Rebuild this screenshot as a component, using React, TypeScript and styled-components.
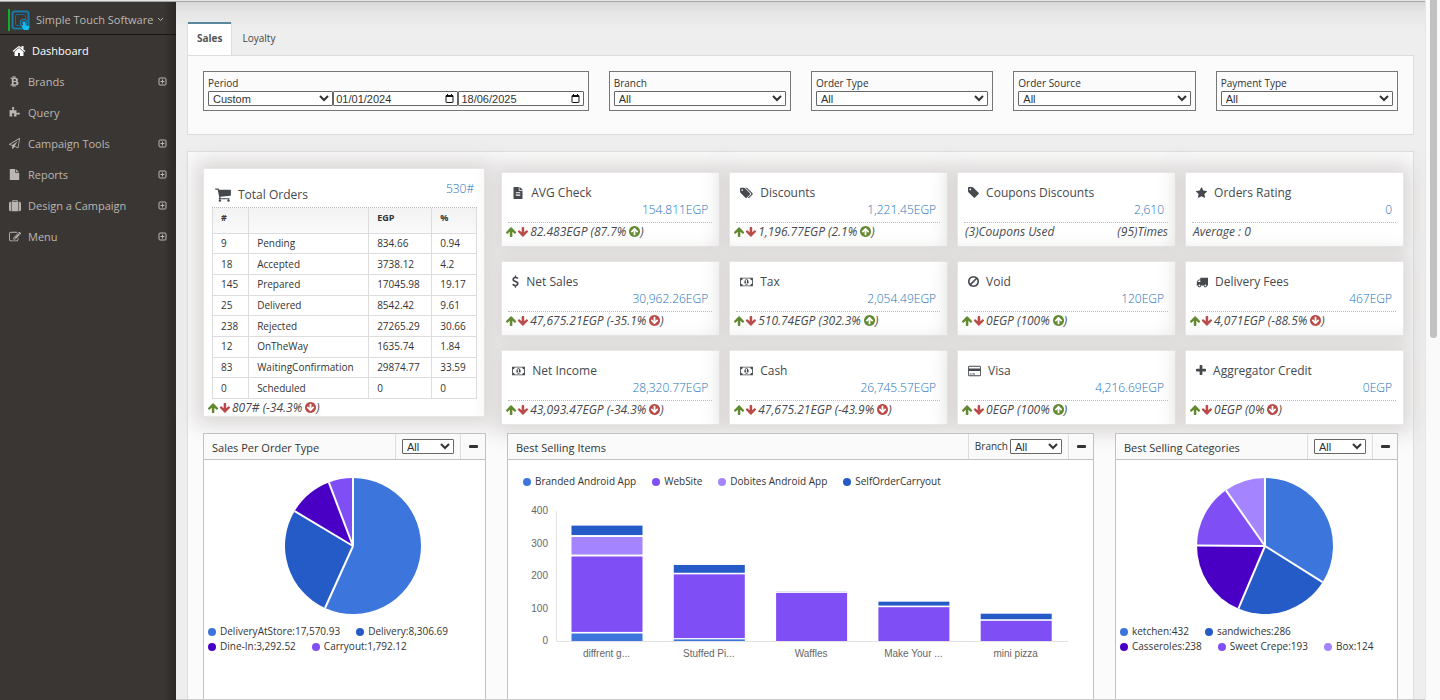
import React from "react";
import styled, { createGlobalStyle } from "styled-components";
import { FaBtc, FaFileAlt } from "react-icons/fa";

const GlobalStyle = createGlobalStyle`
  *, *::before, *::after { box-sizing: border-box; }
  body {
    margin: 0;
    background: #eee;
    color: #333;
    font-family: "Open Sans", "Liberation Sans", sans-serif;
    font-size: 10px;
    line-height: 15px;
  }
  h1, h2, h3, p, ul { margin: 0; padding: 0; font-weight: 400; }
  ul { list-style: none; }
  a { color: inherit; text-decoration: none; }
  svg { flex: none; }
`;

/* ---------- icons ---------- */

/* Each entry: left edge of the glyph, its advance width, its path on a 1792-unit em. */
const glyphs = {
  home: [0, 1792, "M1472 992v480q0 26-19 45t-45 19h-384v-384h-256v384h-384q-26 0-45-19t-19-45v-480q0-1 .5-3t.5-3l575-474 575 474q1 2 1 6zm223-69l-62 74q-8 9-21 11h-3q-13 0-21-7l-692-577-692 577q-12 8-24 7-13-2-21-11l-62-74q-8-10-7-23.5t11-21.5l719-599q32-26 76-26t76 26l244 204v-195q0-14 9-23t23-9h192q14 0 23 9t9 23v408l219 182q10 8 11 21.5t-7 23.5z"],
  puzzle: [0, 1792, "M1755 1083q0 81-44.5 135t-123.5 54q-41 0-77.5-17.5t-59-38-56.5-38-71-17.5q-110 0-110 124 0 39 16 115t15 115v5q-22 0-33 1-34 3-97.5 11.5t-115.5 13.5-98 5q-61 0-103-26.5t-42-83.5q0-37 17.5-71t38-56.5 38-59 17.5-77.5q0-79-54-123.5t-135-44.5q-84 0-143 45.5t-59 127.5q0 43 15 83t33.5 64.5 33.5 53 15 50.5q0 45-46 89-37 35-117 35-95 0-245-24-9-2-27.5-4t-27.5-4l-13-2q-1 0-3-1-2 0-2-1v-1024q2 1 17.5 3.5t34 5 21.5 3.5q150 24 245 24 80 0 117-35 46-44 46-89 0-22-15-50.5t-33.5-53-33.5-64.5-15-83q0-82 59-127.5t144-45.5q80 0 134 44.5t54 123.5q0 41-17.5 77.5t-38 59-38 56.5-17.5 71q0 57 42 83.5t103 26.5q64 0 180-15t163-17v2q-1 2-3.5 17.5t-5 34-3.5 21.5q-24 150-24 245 0 80 35 117 44 46 89 46 22 0 50.5-15t53-33.5 64.5-33.5 83-15q82 0 127.5 59t45.5 143z"],
  plane: [0, 1792, "M1764 11q33 24 27 64l-256 1536q-5 29-32 45-14 8-31 8-11 0-24-5l-527-215-298 327q-18 21-47 21-14 0-23-4-19-7-30-23.5t-11-36.5v-452l-472-193q-37-14-40-55-3-39 32-59l1664-960q35-21 68 2zm-342 1499l221-1323-1434 827 336 137 863-639-478 797z"],
  file: [0, 1792, "M1152 512v-472q22 14 36 28l408 408q14 14 28 36h-472zm-128 32q0 40 28 68t68 28h544v1056q0 40-28 68t-68 28h-1344q-40 0-68-28t-28-68v-1600q0-40 28-68t68-28h800v544z"],
  suitcase: [0, 1792, "M640 256h512v-128h-512v128zm-352 0v1408h-64q-92 0-158-66t-66-158v-960q0-92 66-158t158-66h64zm1120 0v1408h-1024v-1408h128v-160q0-40 28-68t68-28h576q40 0 68 28t28 68v160h128zm384 224v960q0 92-66 158t-158 66h-64v-1408h64q92 0 158 66t66 158z"],
  edit: [0, 1792, "M888 1184l116-116-152-152-116 116v56h96v96h56zm440-720q-16-16-33 1l-350 350q-17 17-1 33t33-1l350-350q17-17 1-33zm80 594v190q0 119-84.5 203.5t-203.5 84.5h-832q-119 0-203.5-84.5t-84.5-203.5v-832q0-119 84.5-203.5t203.5-84.5h832q63 0 117 25 15 7 18 23 3 17-9 29l-49 49q-14 14-32 8-23-6-45-6h-832q-66 0-113 47t-47 113v832q0 66 47 113t113 47h832q66 0 113-47t47-113v-126q0-13 9-22l64-64q15-15 35-7t20 29zm-96-738l288 288-672 672h-288v-288zm444 132l-92 92-288-288 92-92q28-28 68-28t68 28l152 152q28 28 28 68t-28 68z"],
  cart: [64, 1664, "M704 1536q0 52-38 90t-90 38-90-38-38-90 38-90 90-38 90 38 38 90zm896 0q0 52-38 90t-90 38-90-38-38-90 38-90 90-38 90 38 38 90zm128-1088v512q0 24-16.5 42.5t-40.5 21.5l-1044 122q13 60 13 70 0 16-24 64h920q26 0 45 19t19 45-19 45-45 19h-1024q-26 0-45-19t-19-45q0-11 8-31.5t16-36 21.5-40 15.5-29.5l-177-823h-204q-26 0-45-19t-19-45 19-45 45-19h256q16 0 28.5 6.5t19.5 15.5 13 24.5 8 26 5.5 29.5 4.5 26h1201q26 0 45 19t19 45z"],
  tag: [128, 1536, "M576 448q0-53-37.5-90.5t-90.5-37.5-90.5 37.5-37.5 90.5 37.5 90.5 90.5 37.5 90.5-37.5 37.5-90.5zm1067 576q0 53-37 90l-491 492q-39 37-91 37-53 0-90-37l-715-716q-38-37-64.5-101t-26.5-117v-416q0-52 38-90t90-38h416q53 0 117 26.5t102 64.5l715 714q37 39 37 91z"],
  tags: [0, 1920, "M448 448q0-53-37.5-90.5t-90.5-37.5-90.5 37.5-37.5 90.5 37.5 90.5 90.5 37.5 90.5-37.5 37.5-90.5zm1067 576q0 53-37 90l-491 492q-39 37-91 37-53 0-90-37l-715-716q-38-37-64.5-101t-26.5-117v-416q0-52 38-90t90-38h416q53 0 117 26.5t102 64.5l715 714q37 39 37 91zm384 0q0 53-37 90l-491 492q-39 37-91 37-36 0-59-14t-53-45l470-470q37-37 37-90 0-52-37-91l-715-714q-38-38-102-64.5t-117-26.5h224q53 0 117 26.5t102 64.5l715 714q37 39 37 91z"],
  star: [64, 1664, "M1728 647q0 22-26 48l-363 354 86 500q1 7 1 20 0 21-10.5 35.5t-30.5 14.5q-19 0-40-12l-449-236-449 236q-22 12-40 12-21 0-31.5-14.5t-10.5-35.5q0-6 2-20l86-500-364-354q-25-27-25-48 0-37 56-46l502-73 225-455q19-41 49-41t49 41l225 455 502 73q56 9 56 46z"],
  dollar: [400, 1024, "M1362 1185q0 153-99.5 263.5t-258.5 136.5v175q0 14-9 23t-23 9h-135q-13 0-22.5-9.5t-9.5-22.5v-175q-66-9-127.5-31t-101.5-44.5-74-48-46.5-37.5-17.5-18q-17-21-2-41l103-135q7-10 23-12 15-2 24 9l2 2q113 99 243 125 37 8 74 8 81 0 142.5-43t61.5-122q0-28-15-53t-33.5-42-58.5-37.5-66-32-80-32.5q-39-16-61.5-25t-61.5-26.5-62.5-31-56.5-35.5-53.5-42.5-43.5-49-35.5-58-21-66.5-8.5-78q0-138 98-242t255-134v-180q0-13 9.5-22.5t22.5-9.5h135q14 0 23 9t9 23v176q57 6 110.5 23t87 33.5 63.5 37.5 39 29 15 14q17 18 5 38l-81 146q-8 15-23 16-14 3-27-7-3-3-14.5-12t-39-26.5-58.5-32-74.5-26-85.5-11.5q-95 0-155 43t-60 111q0 26 8.5 48t29.5 41.5 39.5 33 56 31 60.5 27 70 27.5q53 20 81 31.5t76 35 75.5 42.5 62 50 53 63.5 31.5 76.5 13 94z"],
  money: [0, 1920, "M768 1152h384v-96h-128v-448h-114l-148 137 77 80q42-37 55-57h2v288h-128v96zm512-256q0 70-21 142t-59.5 134-101.5 101-138 39-138-39-101.5-101-59.5-134-21-142 21-142 59.5-134 101.5-101 138-39 138 39 101.5 101 59.5 134 21 142zm512 256v-512q-106 0-181-75t-75-181h-1152q0 106-75 181t-181 75v512q106 0 181 75t75 181h1152q0-106 75-181t181-75zm128-832v1152q0 26-19 45t-45 19h-1792q-26 0-45-19t-19-45v-1152q0-26 19-45t45-19h1792q26 0 45 19t19 45z"],
  ban: [128, 1536, "M1440 893q0-161-87-295l-754 753q137 89 297 89 111 0 211.5-43.5t173.5-116.5 116-174.5 43-212.5zm-999 299l755-754q-135-91-300-91-148 0-273 73t-198 199-73 274q0 162 89 299zm1223-299q0 157-61 300t-163.5 246-245 164-298.5 61-298.5-61-245-164-163.5-246-61-300 61-299.5 163.5-245.5 245-164 298.5-61 298.5 61 245 164 163.5 245.5 61 299.5z"],
  truck: [0, 1792, "M640 1408q0-52-38-90t-90-38-90 38-38 90 38 90 90 38 90-38 38-90zm-384-512h384v-256h-158q-13 0-22 9l-195 195q-9 9-9 22v30zm1280 512q0-52-38-90t-90-38-90 38-38 90 38 90 90 38 90-38 38-90zm256-1088v1024q0 15-4 26.5t-13.5 18.5-16.5 11.5-23.5 6-22.5 2-25.5 0-22.5-.5q0 106-75 181t-181 75-181-75-75-181h-384q0 106-75 181t-181 75-181-75-75-181h-64q-3 0-22.5.5t-25.5 0-22.5-2-23.5-6-16.5-11.5-13.5-18.5-4-26.5q0-26 19-45t45-19v-320q0-8-.5-35t0-38 2.5-34.5 6.5-37 14-30.5 22.5-30l198-198q19-19 50.5-32t58.5-13h160v-192q0-26 19-45t45-19h1024q26 0 45 19t19 45z"],
  card: [0, 1920, "M1760 128q66 0 113 47t47 113v1216q0 66-47 113t-113 47h-1600q-66 0-113-47t-47-113v-1216q0-66 47-113t113-47h1600zm-1600 128q-13 0-22.5 9.5t-9.5 22.5v224h1664v-224q0-13-9.5-22.5t-22.5-9.5h-1600zm1600 1280q13 0 22.5-9.5t9.5-22.5v-608h-1664v608q0 13 9.5 22.5t22.5 9.5h1600zm-1504-128v-128h256v128h-256zm384 0v-128h384v128h-384z"],
  plus: [192, 1408, "M1600 736v192q0 40-28 68t-68 28h-416v416q0 40-28 68t-68 28h-192q-40 0-68-28t-28-68v-416h-416q-40 0-68-28t-28-68v-192q0-40 28-68t68-28h416v-416q0-40 28-68t68-28h192q40 0 68 28t28 68v416h416q40 0 68 28t28 68z"],
  up: [64, 1664, "M1611 971q0 51-37 90l-75 75q-38 38-91 38-54 0-90-38l-294-293v704q0 52-37.5 84.5t-90.5 32.5h-128q-53 0-90.5-32.5t-37.5-84.5v-704l-294 293q-36 38-90 38t-90-38l-75-75q-38-38-38-90 0-53 38-91l651-651q35-37 90-37 54 0 91 37l651 651q37 39 37 91z"],
  circleUp: [128, 1536, "M1412 895q0-27-18-45l-362-362-91-91q-18-18-45-18t-45 18l-91 91-362 362q-18 18-18 45t18 45l91 91q18 18 45 18t45-18l189-189v502q0 26 19 45t45 19h128q26 0 45-19t19-45v-502l189 189q19 19 45 19t45-19l91-91q18-18 18-45zm252 1q0 209-103 385.5t-279.5 279.5-385.5 103-385.5-103-279.5-279.5-103-385.5 103-385.5 279.5-279.5 385.5-103 385.5 103 279.5 279.5 103 385.5z"],
} as const;

type GlyphName = keyof typeof glyphs;

function Glyph({ name, size = 13, flip }: { name: GlyphName; size?: number; flip?: boolean }) {
  const [left, width, path] = glyphs[name];
  return (
    <svg
      width={Math.round((size * width) / 1792)}
      height={size}
      viewBox={`${left} 0 ${width} 1792`}
      fill="currentColor"
      aria-hidden="true"
    >
      <path d={path} transform={flip ? "rotate(180 896 896)" : undefined} />
    </svg>
  );
}

function ExpandIcon() {
  return (
    <svg width="9" height="9" viewBox="0 0 9 9" fill="none" stroke="currentColor" aria-hidden="true">
      <rect x="1" y="1" width="7" height="7" rx="1" />
      <path d="M2.5 4.5h4M4.5 2.5v4" />
    </svg>
  );
}

function BrandLogo() {
  return (
    <svg width="22" height="22" viewBox="0 0 22 22" fill="none" aria-hidden="true">
      <path d="M1 0v22" stroke="#0db02b" strokeWidth="2" />
      <rect x="4.5" y="2.5" width="16" height="17" rx="2" stroke="#1b7ba8" strokeWidth="2" />
      <rect x="7.5" y="5.5" width="10" height="11" rx="1.5" stroke="#17698f" />
      <circle cx="15.5" cy="13.5" r="3.4" fill="#3a3633" stroke="#1b8fc4" />
      <circle cx="15.5" cy="13.5" r="1.4" stroke="#1b8fc4" />
      <path d="M15 13v4l-2-.5 3 4.500h4.500l1-3.500-4-1.500v-3z" fill="#12bdf2" />
    </svg>
  );
}

/* ---------- shell ---------- */

const Shell = styled.div`
  display: flex;
  min-height: 100vh;
`;

const Page = styled.div`
  flex: 1;
  min-width: 0;
  display: flex;
  flex-direction: column;
  border-top: 1px solid #e4e5e4;
`;

const PageBody = styled.div`
  flex: 1;
  display: flex;
  border-top: 1px solid #a3a6a4;
`;

const ScrollTrack = styled.div`
  flex: none;
  width: 15px;
  padding: 0 3px 0 4px;
  background: #fafafa;
  border-left: 1px solid #e6e6e6;
`;

const ScrollThumb = styled.div`
  height: 338px;
  border-radius: 0 0 4px 4px;
  background: #c1c1c1;
`;

const Sidebar = styled.aside`
  flex: none;
  width: 176px;
  color: #bbb6b2;
  font-size: 11px;
  background: linear-gradient(to left, #2b2826 0, #3a3633 12px) #3a3633;
`;

const Account = styled.button`
  display: flex;
  align-items: center;
  width: 100%;
  height: 33px;
  padding: 3px 10px 0 8px;
  border: 0;
  border-bottom: 1px solid #181614;
  background: none;
  color: inherit;
  font: inherit;
  white-space: nowrap;
`;

const AccountName = styled.span`
  margin: 0 4px 0 6px;
`;

const NavLink = styled.a<{ $active?: boolean }>`
  display: flex;
  align-items: center;
  height: 31px;
  padding: 0 9px 0 ${(p) => (p.$active ? 12 : 9)}px;
  color: ${(p) => (p.$active ? "#fff" : "inherit")};
`;

const NavIcon = styled.span<{ $active?: boolean }>`
  display: flex;
  width: ${(p) => (p.$active ? 20 : 19)}px;
`;

const NavText = styled.span`
  flex: 1;
`;

const Main = styled.main`
  flex: 1;
  min-width: 0;
  display: flex;
  flex-direction: column;
  padding: 20px 11px 0;
  border-bottom: 1px solid #ccc;
  background: linear-gradient(#d8d8d8 0, #e6e6e6 10px, #eee 28px) #eee;
`;

const Tabs = styled.div`
  display: flex;
  height: 33px;
`;

const Tab = styled.button<{ $active?: boolean }>`
  padding: 0 9px 1px;
  border: 0 solid ${(p) => (p.$active ? "#ddd" : "transparent")};
  border-width: 0 1px;
  background: ${(p) => (p.$active ? "#fff" : "none")};
  box-shadow: ${(p) => (p.$active ? "inset 0 2px 0 #57889c" : "none")};
  color: ${(p) => (p.$active ? "#555" : "#444")};
  font: ${(p) => (p.$active ? 700 : 400)} 10px/15px "Open Sans", sans-serif;
`;

const FilterPanel = styled.section`
  display: grid;
  grid-template-columns: 385fr repeat(4, 182fr);
  gap: 20px;
  padding: 15px 15px 23px;
  border: 1px solid #ddd;
  background: #fbfbfb;
`;

const FilterBox = styled.div`
  min-width: 0;
  padding: 4px;
  border: 1px solid #767676;
`;

const FilterLabel = styled.label`
  display: block;
`;

const FieldRow = styled.div`
  display: grid;
  grid-auto-flow: column;
  grid-auto-columns: minmax(0, 1fr);
`;

const Select = styled.select<{ $width?: number }>`
  width: ${(p) => (p.$width ? `${p.$width}px` : "100%")};
  height: 15px;
  padding: 0;
  border: 1px solid #666;
  border-radius: 1px;
  background-color: #fff;
  color: #333;
  font: 11px/13px "Liberation Sans", sans-serif;
`;

const DateField = styled.span`
  display: flex;
  align-items: center;
  height: 15px;
  padding: 0 3px 0 2px;
  border: 1px solid #666;
  border-radius: 1px;
  background: #fff;
`;

const DateInput = styled.input`
  flex: 1;
  min-width: 0;
  height: 13px;
  padding: 1px 0 0;
  border: 0;
  background: none;
  color: #333;
  font: 11px/12px "Liberation Sans", sans-serif;
`;

const Dashboard = styled.section`
  flex: 1;
  display: flex;
  flex-direction: column;
  margin-top: 16px;
  border: 1px solid #ddd;
  border-bottom: 0;
  background: #fbfbfb;
`;

/* ---------- statistics ---------- */

const Stats = styled.div`
  display: grid;
  grid-template-columns: minmax(0, 282fr) minmax(0, 902fr);
  align-items: start;
  gap: 16px;
  padding: 16px 9px 8px 15px;
`;

const Card = styled.article`
  background: #fff;
  border: 1px solid #e8e6e6;
  box-shadow: 0 0 20px 7px #d8d5d4;
  color: #45484d;
`;

const OrdersCard = styled(Card)`
  padding: 12px 7px 0 4px;
`;

const OrdersHead = styled.div`
  display: flex;
  justify-content: space-between;
  height: 27px;
  margin-left: 4px;
  padding: 0 3px;
  border-bottom: 1px dotted #bbb;
`;

const OrdersTitle = styled.h2`
  display: flex;
  align-items: center;
  gap: 7px;
  font-size: 12px;
`;

const OrdersTotal = styled.span`
  font-size: 12px;
  font-weight: 300;
  color: #1c74ba;
`;

const OrdersTable = styled.table`
  width: calc(100% - 4px);
  height: 191px;
  margin-left: 4px;
  border-collapse: collapse;
  color: #333;

  th, td {
    padding: 0 8px;
    border: 1px solid #ddd;
    text-align: left;
  }
  th {
    height: 25px;
    padding-bottom: 6px;
    border-top: 0;
    background: linear-gradient(#f2f2f2, #fafafa);
    font-size: 9px;
  }
`;

const KpiGrid = styled.div`
  display: grid;
  grid-template-columns: repeat(4, minmax(0, 1fr));
  gap: 14px 9px;
  margin-top: 4px;
`;

const KpiCard = styled(Card)`
  padding: 10px 4px 6px;
`;

const KpiTitle = styled.h3`
  display: flex;
  align-items: center;
  gap: 7px;
  height: 18px;
  padding: 1px 0 0 6px;
  font-size: 12px;
  line-height: 17px;
`;

const KpiValue = styled.p`
  height: 22px;
  margin: 0 3px 0 2px;
  padding-right: 4px;
  border-bottom: 1px dotted #bbb;
  color: #1c74ba;
  font-size: 12px;
  font-weight: 300;
  line-height: 18px;
  text-align: right;
`;

const KpiFoot = styled.p<{ $plain?: boolean }>`
  display: flex;
  align-items: center;
  justify-content: ${(p) => (p.$plain ? "space-between" : "flex-start")};
  height: 17px;
  padding: 0 ${(p) => (p.$plain ? 3 : 0)}px;
  font-size: 12px;
  font-style: italic;
  line-height: 17px;
  white-space: nowrap;
`;

const Tone = styled.span<{ $up?: boolean }>`
  display: flex;
  color: ${(p) => (p.$up ? "#61892f" : "#b94a48")};
`;

const TrendText = styled.span`
  margin: 0 3px 0 2px;
`;

function Trend({ text, up }: { text: string; up?: boolean }) {
  return (
    <KpiFoot>
      <Tone $up><Glyph name="up" size={12} /></Tone>
      <Tone><Glyph name="up" size={12} flip /></Tone>
      <TrendText>{text}</TrendText>
      <Tone $up={up}><Glyph name="circleUp" size={13} flip={!up} /></Tone>
      <span>)</span>
    </KpiFoot>
  );
}

/* ---------- widgets ---------- */

const Widgets = styled.div`
  flex: 1;
  display: grid;
  grid-template-columns: 283fr 587fr 283fr;
  gap: 21px;
  padding: 0 15px;
`;

const Widget = styled.section`
  position: relative;
  min-width: 0;
  min-height: 265px;
  border: 1px solid #c2c2c2;
  border-bottom: 0;
  background: #fff;
`;

const WidgetHead = styled.header`
  display: flex;
  height: 26px;
  border-bottom: 1px solid #c2c2c2;
  background: #fafafa;
`;

const WidgetTitle = styled.h2`
  flex: 1;
  padding-left: 8px;
  font-size: 11px;
  line-height: 28px;
`;

const WidgetTools = styled.div`
  display: flex;
  align-items: center;
  gap: 2px;
  padding: 0 6px;
  border-left: 1px solid #ddd;
`;

const CollapseButton = styled.button`
  display: grid;
  place-items: center;
  width: 25px;
  padding: 0;
  border: 0;
  border-left: 1px solid #ddd;
  background: none;
`;

const CollapseBar = styled.span`
  width: 9px;
  height: 3px;
  border-radius: 1px;
  background: #333;
`;

const PieBody = styled.div`
  display: flex;
  justify-content: center;
  padding: 17px 0 9px 16px;
`;

const Legend = styled.ul<{ $wide?: boolean }>`
  display: flex;
  flex-wrap: wrap;
  column-gap: 16px;
  padding: ${(p) => (p.$wide ? "14px 15px 0" : "0 18px 0 4px")};
`;

const LegendItem = styled.li`
  display: flex;
  align-items: center;
  gap: 4px;
`;

const Dot = styled.i<{ $color: string }>`
  width: 8px;
  height: 8px;
  border-radius: 50%;
  background: ${(p) => p.$color};
`;

const BarBody = styled.div`
  padding: 14px 0 0 15px;

  svg { display: block; max-width: 100%; }
  text { font: 10px "Liberation Sans", sans-serif; fill: #666; }
`;

const blue = "#3c76dc";
const navy = "#245bc7";
const indigo = "#4a00c4";
const violet = "#804ef5";
const lilac = "#a485ff";

type Slice = { label: string; value: number; color: string };

function Pie({ slices, title }: { slices: Slice[]; title: string }) {
  const total = slices.reduce((sum, s) => sum + s.value, 0);
  const point = (turn: number) =>
    `${69 + 68 * Math.sin(turn * 2 * Math.PI)} ${69 - 68 * Math.cos(turn * 2 * Math.PI)}`;
  let start = 0;
  return (
    <svg width="138" height="138" viewBox="0 0 138 138" role="img" aria-label={title}>
      {slices.map((s) => {
        const from = start;
        const share = s.value / total;
        start += share;
        return (
          <path
            key={s.label}
            d={`M69 69L${point(from)}A68 68 0 ${share > 0.5 ? 1 : 0} 1 ${point(start)}Z`}
            fill={s.color}
          />
        );
      })}
      {slices.map((s) => {
        start += s.value / total;
        return <path key={s.label} d={`M69 69L${point(start)}`} stroke="#fff" strokeWidth="2" />;
      })}
    </svg>
  );
}

function LegendList({ items, wide }: { items: { label: string; color: string }[]; wide?: boolean }) {
  return (
    <Legend $wide={wide}>
      {items.map((item) => (
        <LegendItem key={item.label}>
          <Dot $color={item.color} />
          {item.label}
        </LegendItem>
      ))}
    </Legend>
  );
}

const bars = [
  { label: "diffrent g...", parts: [[0, 23, blue], [28, 260, violet], [266, 320, lilac], [326, 355, navy]] },
  { label: "Stuffed Pi...", parts: [[0, 5, blue], [9, 205, violet], [210, 234, navy]] },
  { label: "Waffles", parts: [[0, 148, violet], [151, 154, "#dfe4f0"]] },
  { label: "Make Your ...", parts: [[0, 104, violet], [109, 121, navy]] },
  { label: "mini pizza", parts: [[0, 62, violet], [67, 84, navy]] },
] as { label: string; parts: [number, number, string][] }[];

function BarChart() {
  const y = (v: number) => 138 - v * 0.325;
  return (
    <svg width="550" height="160" viewBox="0 0 550 160" role="img" aria-label="Best selling items by source">
      {[0, 100, 200, 300, 400].map((v) => (
        <text key={v} x="25" y={y(v) + 3} textAnchor="end">{v}</text>
      ))}
      <path d="M33.500 8V138.500H545" fill="none" stroke="#e3e3e3" />
      {bars.map((bar, i) => {
        const x = 48.5 + i * 102.3;
        return (
          <g key={bar.label}>
            {bar.parts.map(([from, to, color]) => (
              <rect key={from} x={x} y={y(to)} width="71" height={y(from) - y(to)} fill={color} />
            ))}
            <text x={x + 35} y="154" textAnchor="middle">{bar.label}</text>
          </g>
        );
      })}
    </svg>
  );
}

function WidgetBox({ id, title, toolLabel, children }: { id: string; title: string; toolLabel?: string; children: React.ReactNode }) {
  return (
    <Widget>
      <WidgetHead>
        <WidgetTitle>{title}</WidgetTitle>
        <WidgetTools>
          {toolLabel && <label htmlFor={id}>{toolLabel}</label>}
          <Select id={id} $width={52} aria-label={toolLabel ?? title}><option>All</option></Select>
        </WidgetTools>
        <CollapseButton type="button" aria-label={`Collapse ${title}`}><CollapseBar /></CollapseButton>
      </WidgetHead>
      {children}
    </Widget>
  );
}

function DateBox({ label, value }: { label: string; value: string }) {
  return (
    <DateField>
      <DateInput type="text" aria-label={label} defaultValue={value} />
      <svg width="9" height="10" viewBox="0 0 9 10" fill="none" stroke="#111" aria-hidden="true">
        <rect x="1" y="1.500" width="7" height="7" rx="0.5" />
        <path d="M1 2h7" strokeWidth="2" />
        <path d="M2.500 0v2M6.500 0v2" />
      </svg>
    </DateField>
  );
}

/* ---------- data ---------- */

const nav: { text: string; icon: React.ReactNode; expands?: boolean; active?: boolean }[] = [
  { text: "Dashboard", icon: <Glyph name="home" size={14} />, active: true },
  { text: "Brands", icon: <FaBtc size={11} />, expands: true },
  { text: "Query", icon: <Glyph name="puzzle" size={11} /> },
  { text: "Campaign Tools", icon: <Glyph name="plane" size={11} />, expands: true },
  { text: "Reports", icon: <Glyph name="file" size={11} />, expands: true },
  { text: "Design a Campaign", icon: <Glyph name="suitcase" size={12} />, expands: true },
  { text: "Menu", icon: <Glyph name="edit" size={12} />, expands: true },
];

const orders = [
  ["9", "Pending", "834.66", "0.94"],
  ["18", "Accepted", "3738.12", "4.2"],
  ["145", "Prepared", "17045.98", "19.17"],
  ["25", "Delivered", "8542.42", "9.61"],
  ["238", "Rejected", "27265.29", "30.66"],
  ["12", "OnTheWay", "1635.74", "1.84"],
  ["83", "WaitingConfirmation", "29874.77", "33.59"],
  ["0", "Scheduled", "0", "0"],
];

type Kpi = { title: string; icon: React.ReactNode; value: string; trend?: string; up?: boolean; notes?: string[] };

const kpis: Kpi[] = [
  { title: "AVG Check", icon: <FaFileAlt size={12} />, value: "154.811EGP", trend: "82.483EGP (87.7%", up: true },
  { title: "Discounts", icon: <Glyph name="tags" size={12} />, value: "1,221.45EGP", trend: "1,196.77EGP (2.1%", up: true },
  { title: "Coupons Discounts", icon: <Glyph name="tag" />, value: "2,610", notes: ["(3)Coupons Used", "(95)Times"] },
  { title: "Orders Rating", icon: <Glyph name="star" size={12} />, value: "0", notes: ["Average : 0"] },
  { title: "Net Sales", icon: <Glyph name="dollar" />, value: "30,962.26EGP", trend: "47,675.21EGP (-35.1%" },
  { title: "Tax", icon: <Glyph name="money" size={12} />, value: "2,054.49EGP", trend: "510.74EGP (302.3%", up: true },
  { title: "Void", icon: <Glyph name="ban" />, value: "120EGP", trend: "0EGP (100%", up: true },
  { title: "Delivery Fees", icon: <Glyph name="truck" size={12} />, value: "467EGP", trend: "4,071EGP (-88.5%" },
  { title: "Net Income", icon: <Glyph name="money" size={12} />, value: "28,320.77EGP", trend: "43,093.47EGP (-34.3%" },
  { title: "Cash", icon: <Glyph name="money" size={12} />, value: "26,745.57EGP", trend: "47,675.21EGP (-43.9%" },
  { title: "Visa", icon: <Glyph name="card" size={12} />, value: "4,216.69EGP", trend: "0EGP (100%", up: true },
  { title: "Aggregator Credit", icon: <Glyph name="plus" />, value: "0EGP", trend: "0EGP (0%" },
];

const orderTypes: Slice[] = [
  { label: "DeliveryAtStore:17,570.93", value: 17570.93, color: blue },
  { label: "Delivery:8,306.69", value: 8306.69, color: navy },
  { label: "Dine-In:3,292.52", value: 3292.52, color: indigo },
  { label: "Carryout:1,792.12", value: 1792.12, color: violet },
];

const categories: Slice[] = [
  { label: "ketchen:432", value: 432, color: blue },
  { label: "sandwiches:286", value: 286, color: navy },
  { label: "Casseroles:238", value: 238, color: indigo },
  { label: "Sweet Crepe:193", value: 193, color: violet },
  { label: "Box:124", value: 124, color: lilac },
];

const sources = [
  { label: "Branded Android App", color: blue },
  { label: "WebSite", color: violet },
  { label: "Dobites Android App", color: lilac },
  { label: "SelfOrderCarryout", color: navy },
];

export default function App() {
  return (
    <Shell>
      <GlobalStyle />
      <Page>
        <PageBody>
          <Sidebar>
            <Account type="button">
              <BrandLogo />
              <AccountName>Simple Touch Software</AccountName>
              <svg width="7" height="5" viewBox="0 0 7 5" fill="none" stroke="currentColor" aria-hidden="true">
                <path d="M1 1l2.500 2.500L6 1" />
              </svg>
            </Account>
            <nav>
              {nav.map((item) => (
                <NavLink key={item.text} href="#" $active={item.active}>
                  <NavIcon $active={item.active}>{item.icon}</NavIcon>
                  <NavText>{item.text}</NavText>
                  {item.expands && <ExpandIcon />}
                </NavLink>
              ))}
            </nav>
          </Sidebar>
          <Main>
            <Tabs>
              <Tab type="button" $active>Sales</Tab>
              <Tab type="button">Loyalty</Tab>
            </Tabs>
            <FilterPanel>
              <FilterBox>
                <FilterLabel htmlFor="period">Period</FilterLabel>
                <FieldRow>
                  <Select id="period"><option>Custom</option></Select>
                  <DateBox label="From" value="01/01/2024" />
                  <DateBox label="To" value="18/06/2025" />
                </FieldRow>
              </FilterBox>
              {["Branch", "Order Type", "Order Source", "Payment Type"].map((label) => (
                <FilterBox key={label}>
                  <FilterLabel htmlFor={label.replace(" ", "-")}>{label}</FilterLabel>
                  <FieldRow>
                    <Select id={label.replace(" ", "-")}><option>All</option></Select>
                  </FieldRow>
                </FilterBox>
              ))}
            </FilterPanel>
            <Dashboard>
              <Stats>
                <OrdersCard>
                  <OrdersHead>
                    <OrdersTitle><Glyph name="cart" size={17} />Total Orders</OrdersTitle>
                    <OrdersTotal>530#</OrdersTotal>
                  </OrdersHead>
                  <OrdersTable>
                    <thead>
                      <tr><th>#</th><th aria-label="Status" /><th>EGP</th><th>%</th></tr>
                    </thead>
                    <tbody>
                      {orders.map((row) => (
                        <tr key={row[1]}>{row.map((cell, i) => <td key={i}>{cell}</td>)}</tr>
                      ))}
                    </tbody>
                  </OrdersTable>
                  <Trend text="807# (-34.3%" />
                </OrdersCard>
                <KpiGrid>
                  {kpis.map((kpi) => (
                    <KpiCard key={kpi.title}>
                      <KpiTitle>{kpi.icon}{kpi.title}</KpiTitle>
                      <KpiValue>{kpi.value}</KpiValue>
                      {kpi.trend ? (
                        <Trend text={kpi.trend} up={kpi.up} />
                      ) : (
                        <KpiFoot $plain>{kpi.notes?.map((note) => <span key={note}>{note}</span>)}</KpiFoot>
                      )}
                    </KpiCard>
                  ))}
                </KpiGrid>
              </Stats>
              <Widgets>
                <WidgetBox id="order-type-filter" title="Sales Per Order Type">
                  <PieBody><Pie slices={orderTypes} title="Sales per order type" /></PieBody>
                  <LegendList items={orderTypes} />
                </WidgetBox>
                <WidgetBox id="items-branch" title="Best Selling Items" toolLabel="Branch">
                  <LegendList items={sources} wide />
                  <BarBody><BarChart /></BarBody>
                </WidgetBox>
                <WidgetBox id="category-filter" title="Best Selling Categories">
                  <PieBody><Pie slices={categories} title="Best selling categories" /></PieBody>
                  <LegendList items={categories} />
                </WidgetBox>
              </Widgets>
            </Dashboard>
          </Main>
        </PageBody>
      </Page>
      <ScrollTrack><ScrollThumb /></ScrollTrack>
    </Shell>
  );
}
